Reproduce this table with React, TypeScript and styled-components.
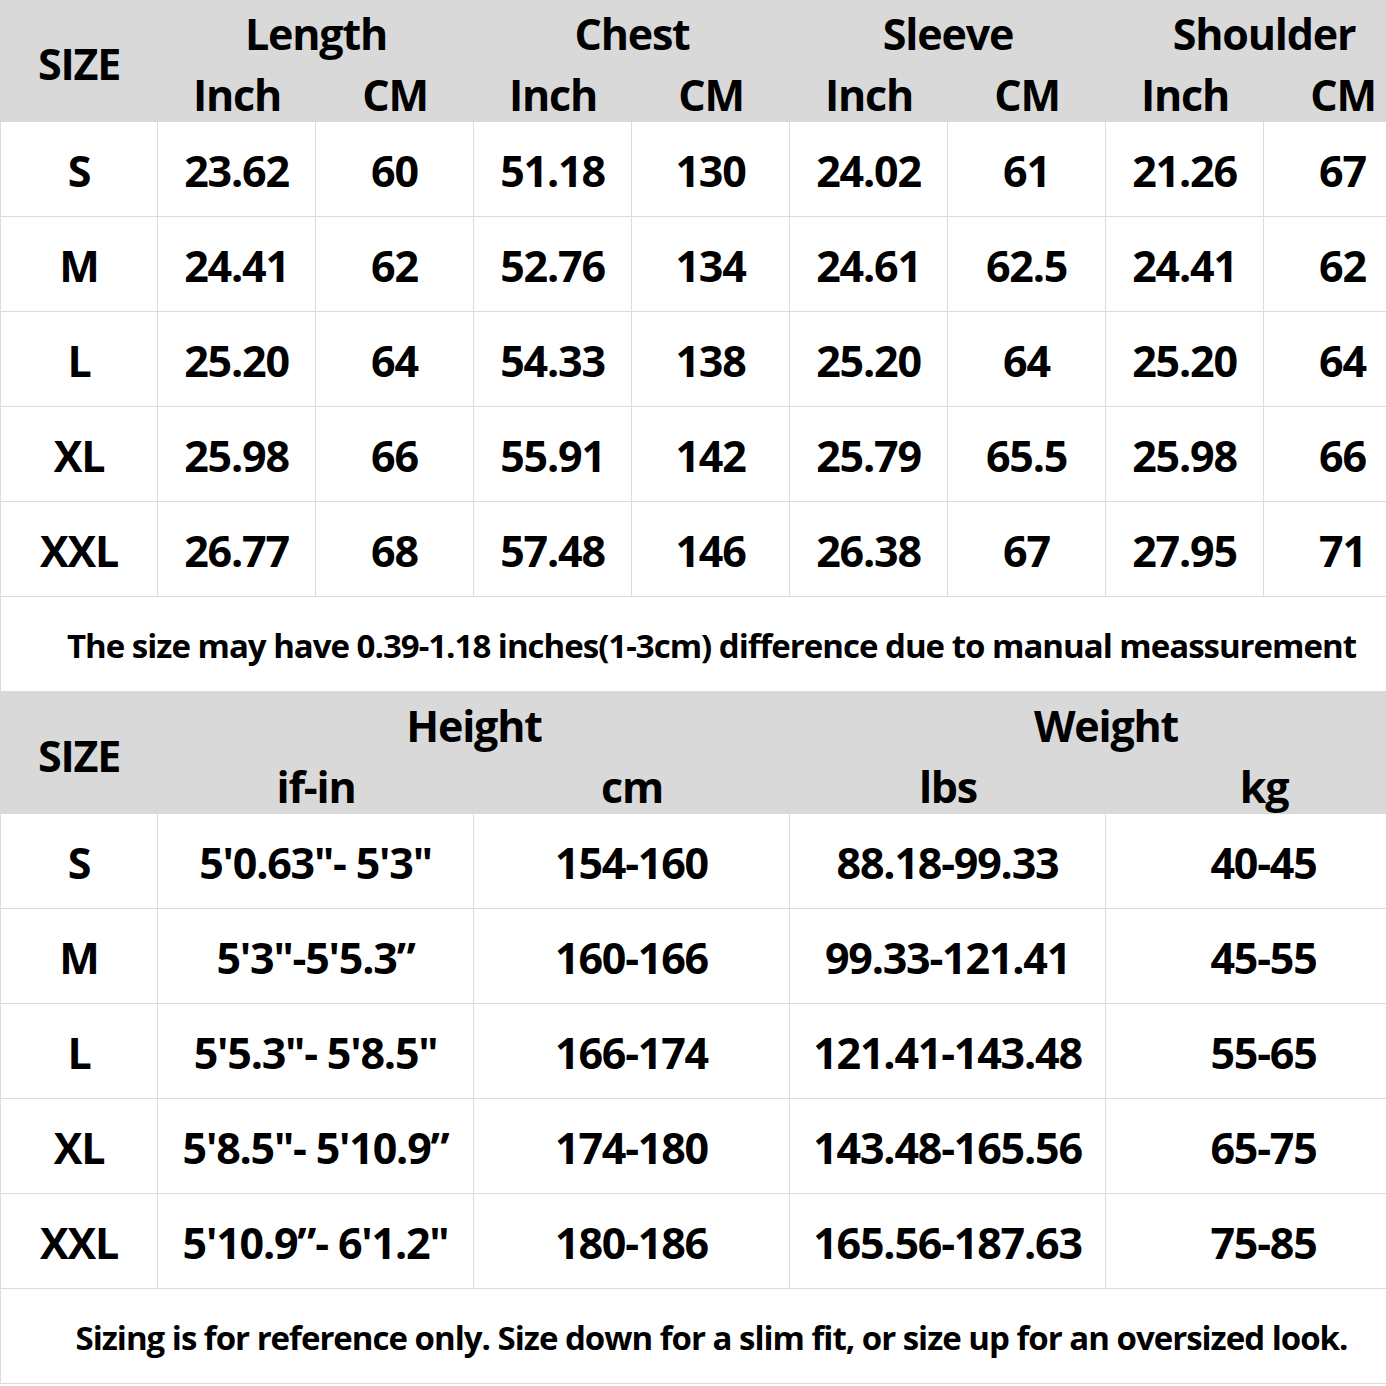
import React from "react"
import styled, { createGlobalStyle } from "styled-components"

const GlobalStyle = createGlobalStyle`
	html, body {
		margin: 0;
		padding: 0;
		background: #ffffff;
	}
	body {
		font-family: "Open Sans", "Noto Sans", sans-serif;
		color: #000000;
	}
`

const COL = 158
const LINE = "#dcdcdc"
const BAND = "#d9d9d9"

const Page = styled.div`
	width: 1386px;
	height: 1386px;
	overflow: hidden;
	background: #ffffff;
`

const Sheet = styled.div`
	width: ${COL * 9}px;
	display: flex;
	flex-direction: column;
	font-weight: 700;
`

const HeadBand = styled.div<{ $cols: string }>`
	display: grid;
	grid-template-columns: ${p => p.$cols};
	grid-template-rows: 61px 61px;
	height: 122px;
	background: ${BAND};
`

const HeadCell = styled.div<{ $span?: number; $rows?: number; $dy?: number }>`
	grid-column: span ${p => p.$span ?? 1};
	grid-row: span ${p => p.$rows ?? 1};
	display: flex;
	align-items: center;
	justify-content: center;
	font-size: 43px;
	letter-spacing: -1.2px;
	line-height: 1;
	transform: translateY(${p => p.$dy ?? 0}px);
	white-space: nowrap;
`

const Row = styled.div<{ $cols: string }>`
	display: grid;
	grid-template-columns: ${p => p.$cols};
	height: 95px;
	border-bottom: 1px solid ${LINE};
	box-sizing: border-box;
`

const Cell = styled.div`
	display: flex;
	align-items: center;
	justify-content: center;
	font-size: 43px;
	letter-spacing: -1.2px;
	line-height: 1;
	white-space: nowrap;
	border-right: 1px solid ${LINE};
	padding-top: 3px;

	&:first-child {
		border-left: 1px solid ${LINE};
	}
`

const Note = styled.div`
	height: 95px;
	display: flex;
	align-items: center;
	justify-content: center;
	font-size: 33px;
	letter-spacing: -1px;
	white-space: nowrap;
	border-bottom: 1px solid ${LINE};
	border-left: 1px solid ${LINE};
	box-sizing: border-box;
	padding-top: 2px;
`

const topCols = `repeat(9, ${COL}px)`
const bottomCols = `${COL}px repeat(4, ${COL * 2}px)`

const topRows = [
	["S", "23.62", "60", "51.18", "130", "24.02", "61", "21.26", "67"],
	["M", "24.41", "62", "52.76", "134", "24.61", "62.5", "24.41", "62"],
	["L", "25.20", "64", "54.33", "138", "25.20", "64", "25.20", "64"],
	["XL", "25.98", "66", "55.91", "142", "25.79", "65.5", "25.98", "66"],
	["XXL", "26.77", "68", "57.48", "146", "26.38", "67", "27.95", "71"],
]

const bottomRows = [
	["S", "5'0.63\"- 5'3\"", "154-160", "88.18-99.33", "40-45"],
	["M", "5'3\"-5'5.3\u201D", "160-166", "99.33-121.41", "45-55"],
	["L", "5'5.3\"- 5'8.5\"", "166-174", "121.41-143.48", "55-65"],
	["XL", "5'8.5\"- 5'10.9\u201D", "174-180", "143.48-165.56", "65-75"],
	["XXL", "5'10.9\u201D- 6'1.2\"", "180-186", "165.56-187.63", "75-85"],
]

const groups = ["Length", "Chest", "Sleeve", "Shoulder"]

export default function App() {
	return (
		<Page>
			<GlobalStyle />
			<Sheet>
				<HeadBand $cols={topCols}>
					<HeadCell $rows={2} $dy={2}>SIZE</HeadCell>
					{groups.map(g => (
						<HeadCell key={g} $span={2} $dy={3}>
							{g}
						</HeadCell>
					))}
					{groups.map(g => (
						<React.Fragment key={g}>
							<HeadCell $dy={3}>Inch</HeadCell>
							<HeadCell $dy={3}>CM</HeadCell>
						</React.Fragment>
					))}
				</HeadBand>
				{topRows.map(r => (
					<Row key={r[0]} $cols={topCols}>
						{r.map((v, i) => (
							<Cell key={i}>{v}</Cell>
						))}
					</Row>
				))}
				<Note>
					The size may have 0.39-1.18 inches(1-3cm) difference due to manual
					meassurement
				</Note>
				<HeadBand $cols={bottomCols}>
					<HeadCell $rows={2} $dy={2}>SIZE</HeadCell>
					<HeadCell $span={2} $dy={3}>Height</HeadCell>
					<HeadCell $span={2} $dy={3}>Weight</HeadCell>
					<HeadCell $dy={3}>if-in</HeadCell>
					<HeadCell $dy={3}>cm</HeadCell>
					<HeadCell $dy={3}>lbs</HeadCell>
					<HeadCell $dy={3}>kg</HeadCell>
				</HeadBand>
				{bottomRows.map(r => (
					<Row key={r[0]} $cols={bottomCols}>
						{r.map((v, i) => (
							<Cell key={i}>{v}</Cell>
						))}
					</Row>
				))}
				<Note>
					Sizing is for reference only. Size down for a slim fit, or size up
					for an oversized look.
				</Note>
			</Sheet>
		</Page>
	)
}
